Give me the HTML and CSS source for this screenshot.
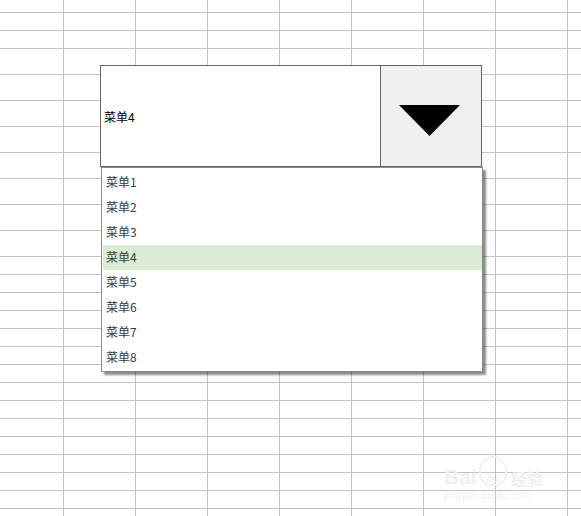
FILE: index.html
```html
<!DOCTYPE html>
<html lang="zh-CN">
<head>
    <meta charset="UTF-8">
    <meta name="viewport" content="width=device-width, initial-scale=1.0">
    <title>下拉菜单</title>
    <link rel="stylesheet" href="styles.css">
</head>
<body>
    <div class="sheet">
        <div class="row row-top"></div>
        <div class="row"></div>
        <div class="row"></div>
        <div class="row tall"></div>
        <div class="row tall"></div>
        <div class="row tall"></div>
        <div class="row tall"></div>
        <div class="row tall"></div>
        <div class="row tall"></div>
        <div class="row tall"></div>
        <div class="row tall"></div>
        <div class="row"></div>
        <div class="row"></div>
        <div class="row"></div>
        <div class="row"></div>
        <div class="row"></div>
        <div class="row"></div>
        <div class="row"></div>
        <div class="row"></div>
        <div class="row"></div>
        <div class="row"></div>
        <div class="row"></div>
        <div class="row"></div>
        <div class="row"></div>
        <div class="row"></div>
        <div class="row"></div>

        <div class="combo">
            <div class="combo-value">菜单4</div>
            <div class="combo-button">
                <svg width="61" height="31" viewBox="0 0 61 31">
                    <polygon points="0,0 61,0 30.5,31" fill="#000"/>
                </svg>
            </div>
        </div>

        <ul class="menu">
            <li class="menu-item">菜单1</li>
            <li class="menu-item">菜单2</li>
            <li class="menu-item">菜单3</li>
            <li class="menu-item selected">菜单4</li>
            <li class="menu-item">菜单5</li>
            <li class="menu-item">菜单6</li>
            <li class="menu-item">菜单7</li>
            <li class="menu-item">菜单8</li>
        </ul>

        <div class="watermark">
            <div class="wm-top">
                <span class="wm-bai">Bai</span>
                <span class="wm-paw">du</span>
                <span class="wm-cn">经验</span>
            </div>
            <div class="wm-url">jingyan.baidu.com</div>
        </div>
    </div>
</body>
</html>
```

FILE: styles.css
```css
* {
    box-sizing: border-box;
}
body {
    margin: 0;
    font-family: "Noto Sans CJK SC", "Noto Sans", sans-serif;
    background-color: #fff;
}
.sheet {
    position: relative;
    width: 581px;
    height: 516px;
    overflow: hidden;
    background-image: repeating-linear-gradient(to right, #c2c2c2, #c2c2c2 1px, transparent 1px, transparent);
    background-size: 72px 100%;
    background-position: 63px 0;
}
.row {
    height: 18px;
    border-bottom: 1px solid #c2c2c2;
}
.row-top {
    height: 13px;
}
.tall {
    height: 26px;
}

/* combo box */
.combo {
    position: absolute;
    left: 100px;
    top: 65px;
    width: 382px;
    height: 102px;
    display: flex;
    border: 1px solid #666;
    background-color: #fff;
}
.combo-value {
    flex: 1;
    display: flex;
    align-items: center;
    padding: 1px 0 0 3px;
    font-size: 12px;
    color: #000;
}
.combo-button {
    width: 101px;
    border-left: 1px solid #666;
    background-color: #f0f0f0;
    display: flex;
    justify-content: center;
    align-items: center;
    padding: 8px 4px 0 0;
}
.combo-button svg {
    display: block;
}

/* dropdown list */
.menu {
    position: absolute;
    left: 101px;
    top: 167px;
    width: 382px;
    height: 205px;
    margin: 0;
    padding: 2px 0 1px;
    list-style: none;
    background-color: #fff;
    border: 1px solid #8a8a8a;
    box-shadow: 3px 3px 2px rgba(0, 0, 0, 0.45);
}
.menu-item {
    height: 25px;
    margin: 0 0 0 1px;
    padding: 0 0 2px 3px;
    display: flex;
    align-items: center;
    font-size: 12px;
    color: #3a3a3a;
}
.selected {
    background-color: #dbecd5;
}

/* watermark */
.watermark {
    position: absolute;
    left: 444px;
    top: 452px;
    color: #efefef;
    font-family: "Liberation Sans", Arial, sans-serif;
}
.wm-top {
    display: flex;
    align-items: flex-end;
    height: 34px;
}
.wm-bai {
    font-size: 21px;
    font-weight: bold;
    line-height: 1;
    margin-bottom: -1px;
}
.wm-paw {
    width: 28px;
    height: 30px;
    margin-left: 2px;
    border-radius: 50% 50% 40% 40%;
    border: 2px solid #f2f2f2;
    font-size: 10px;
    font-weight: bold;
    display: flex;
    justify-content: center;
    align-items: flex-end;
}
.wm-cn {
    margin-left: 4px;
    font-family: "Noto Sans CJK SC", sans-serif;
    font-size: 16px;
    font-weight: bold;
    line-height: 1;
}
.wm-url {
    margin-top: 4px;
    font-size: 10px;
    letter-spacing: 0.4px;
}
```
